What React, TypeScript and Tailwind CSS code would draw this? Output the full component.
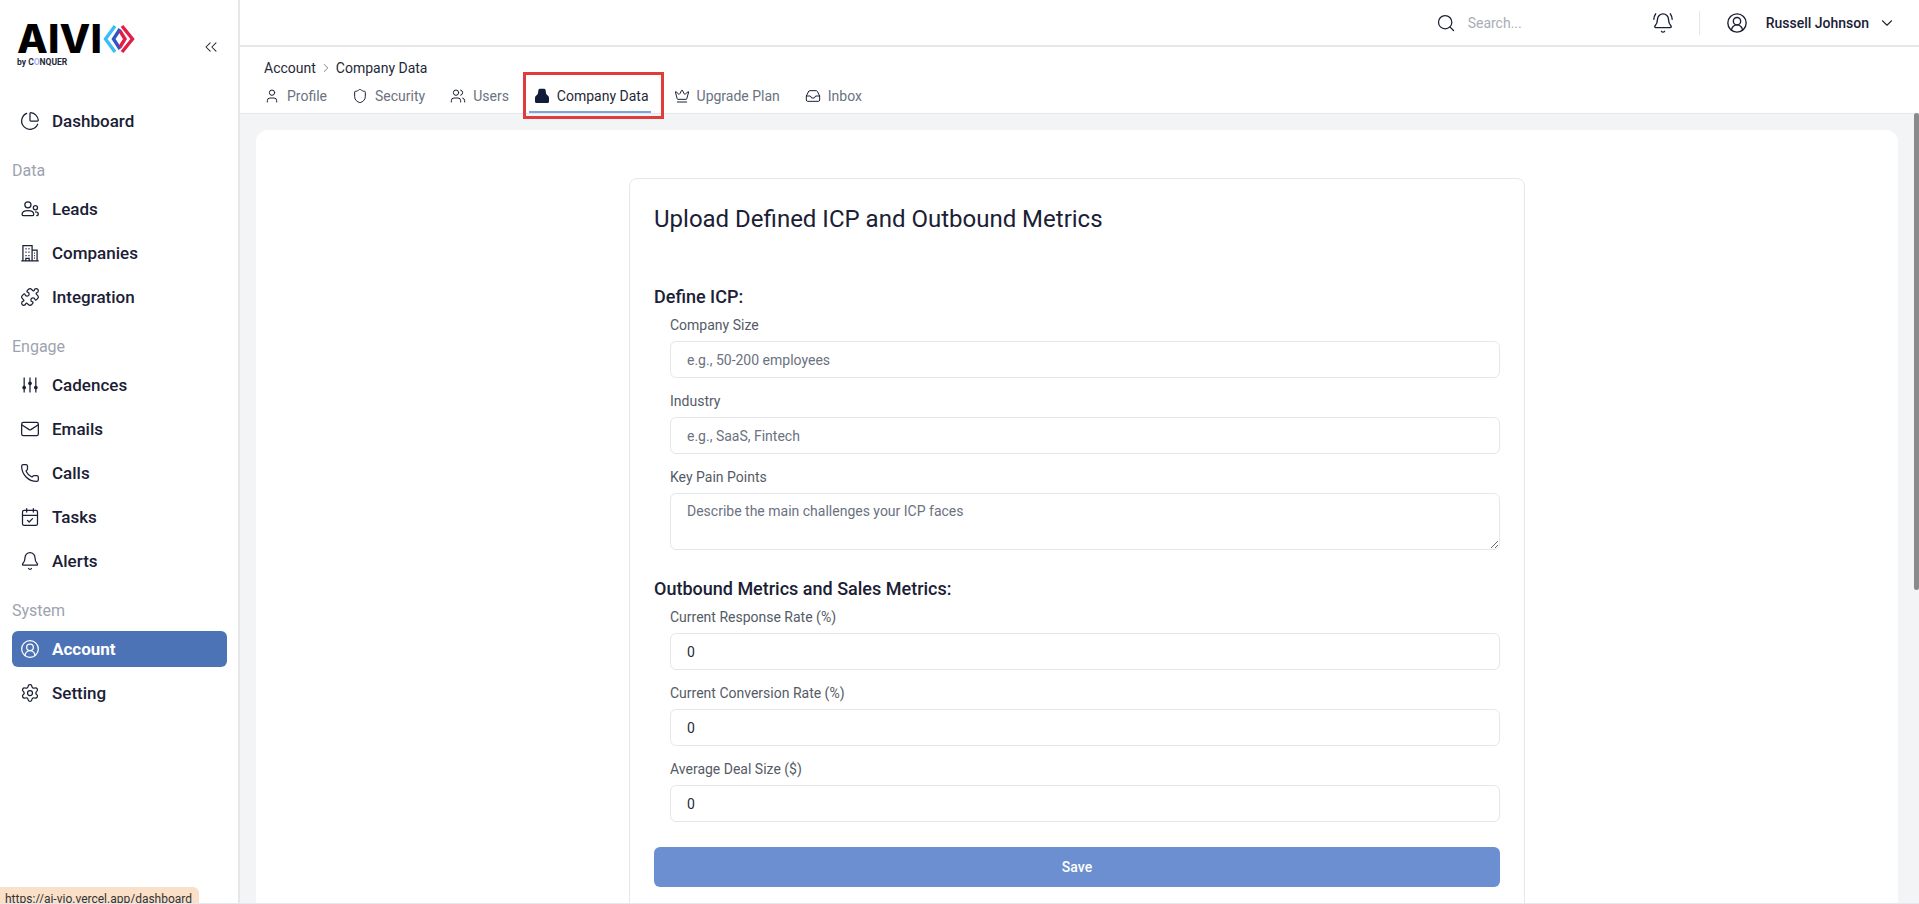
import {
  PieChart, Puzzle, Mail, Phone, CalendarCheck, Bell, CircleUserRound, Settings, Users,
  ChevronsLeft, ChevronRight, ChevronDown, Search, BellRing, User, Shield, Crown, Inbox,
} from 'lucide-react';

const roboto = "font-['Roboto','Liberation_Sans',sans-serif]";

const LeadsIcon = (props: any) => (
  <svg viewBox="0 0 24 24" fill="none" stroke="currentColor" strokeWidth={1.5} {...props}>
    <circle cx="9.5" cy="7" r="3.7" />
    <path d="M2.5 18.5c0-2.800 3-4.500 7-4.500s7 1.700 7 4.500c0 1-.8 1.500-2 1.500h-10c-1.200 0-2-.5-2-1.500z" />
    <circle cx="18.500" cy="10.500" r="2.500" />
    <path d="M18 15.500c2.500 0 4 1 4 2.500 0 1.300-1 2-2.500 2" />
  </svg>
);

const CompaniesIcon = (props: any) => (
  <svg viewBox="0 0 24 24" fill="none" stroke="currentColor" strokeWidth={1.5} {...props}>
    <path d="M1.500 21.500h21M3.500 21.500V3h11v18.500M14.500 8.500h6v13" />
    <path d="M6.500 7h1.500M10 7h1.500M6.500 11h1.500M10 11h1.500M6.500 15h1.500M10 15h1.500M7 21.500V18.500h4v3M17 12h1M17 15h1M17 18h1" />
  </svg>
);

const CadencesIcon = (props: any) => (
  <svg viewBox="0 0 24 24" fill="currentColor" stroke="currentColor" strokeWidth={1.5} {...props}>
    <path d="M5 3v18M12 3v18M19 3v18" fill="none" />
    <circle cx="5" cy="15" r="1.500" />
    <circle cx="12" cy="10" r="1.500" />
    <circle cx="19" cy="15" r="1.500" />
  </svg>
);

const NavItem = ({ icon: Icon, label, active }: { icon: any; label: string; active?: boolean }) => (
  <div
    className={
      'flex items-center gap-3 h-9 pl-2 rounded-md text-[17px] ' +
      (active ? 'bg-[#4d73b7] text-white font-bold' : 'text-[#1a2035] font-medium')
    }
  >
    <Icon className="w-5 h-5" strokeWidth={1.5} />
    <span className="pt-[1px]">{label}</span>
  </div>
);

const Section = ({ title, children }: { title: string; children: React.ReactNode }) => (
  <div className="flex flex-col">
    <div className="text-base text-[#9ca3af] h-6 leading-6 mb-2">{title}</div>
    <div className="flex flex-col gap-2">{children}</div>
  </div>
);

const Tab = ({ icon: Icon, label }: { icon: any; label: string }) => (
  <div className="flex items-center gap-[7px] text-sm text-[#6b7280] h-[34px]">
    <Icon className="w-4 h-4 text-[#1a2035]" strokeWidth={1.5} />
    <span>{label}</span>
  </div>
);

const Field = ({ label, placeholder, value }: { label: string; placeholder?: string; value?: string }) => (
  <div className="flex flex-col">
    <label className="text-sm text-[#555b66] h-[18px] leading-[18px] mb-[7px]">{label}</label>
    <input
      readOnly
      value={value ?? ''}
      placeholder={placeholder}
      className="h-[37px] w-full rounded-md border border-[#e5e7eb] bg-white px-4 text-sm text-[#1f2937] placeholder:text-[#6b7280] outline-none"
    />
  </div>
);

const AiviLogo = () => (
  <div className="flex flex-col">
    <div className="flex items-center h-[30px]">
      <span className="font-['Inter',sans-serif] text-[40px] leading-[30px] font-extrabold text-black tracking-[0.2px]">AIVI</span>
      <svg viewBox="0 0 32 30" className="w-8 h-[30px] ml-[1px]" fill="none" strokeWidth="3.400">
        <path d="M12 2 L2.500 15 L12 28" stroke="#38bdf8" />
        <path d="M17 5 L10.500 15 L17 25" stroke="#2f55c4" />
        <path d="M19 2 L29.500 15 L19 28" stroke="#e11d48" />
        <path d="M17 7 L22 15 L17 23" stroke="#e11d48" />
      </svg>
    </div>
    <div className="text-[8.5px] leading-[10px] mt-[3px] font-bold text-[#1f2937]">
      by C<span className="text-[#a5b4fc]">O</span>NQUER
    </div>
  </div>
);

const App = () => {
  return (
    <div className={`flex h-screen w-full overflow-hidden border-b border-[#e5e7eb] bg-white ${roboto} relative`}>
      {/* Sidebar */}
      <aside className="w-[240px] shrink-0 border-r-2 border-[#e5e7eb] bg-white flex flex-col pl-3 pr-[11px] pt-6">
        <div className="flex items-start justify-between h-[79px] pl-[5px] pr-[6px]">
          <AiviLogo />
          <ChevronsLeft className="w-5 h-5 mt-[13px] text-[#1f2937]" strokeWidth={1.25} />
        </div>
        <div className="flex flex-col gap-5">
          <NavItem icon={PieChart} label="Dashboard" />
          <Section title="Data">
            <NavItem icon={LeadsIcon} label="Leads" />
            <NavItem icon={CompaniesIcon} label="Companies" />
            <NavItem icon={Puzzle} label="Integration" />
          </Section>
          <Section title="Engage">
            <NavItem icon={CadencesIcon} label="Cadences" />
            <NavItem icon={Mail} label="Emails" />
            <NavItem icon={Phone} label="Calls" />
            <NavItem icon={CalendarCheck} label="Tasks" />
            <NavItem icon={Bell} label="Alerts" />
          </Section>
          <Section title="System">
            <NavItem icon={CircleUserRound} label="Account" active />
            <NavItem icon={Settings} label="Setting" />
          </Section>
        </div>
      </aside>

      {/* Main */}
      <div className="flex-1 min-w-0 flex flex-col">
        <header className="h-[47px] shrink-0 border-b-2 border-[#e5e7eb] flex items-center justify-end pr-[23px]">
          <Search className="w-5 h-5 text-[#1a2035]" strokeWidth={1.5} />
          <span className="ml-3 w-[184px] text-sm text-[#a9adb6]">Search...</span>
          <BellRing className="w-[22px] h-[22px] text-[#1a2035]" strokeWidth={1.5} />
          <div className="w-px h-6 bg-[#e5e7eb] ml-[25px] mr-[26px]" />
          <CircleUserRound className="w-[22px] h-[22px] text-[#1a2035]" strokeWidth={1.5} />
          <span className="ml-[18px] text-sm font-medium text-[#1a2035]">Russell Johnson</span>
          <ChevronDown className="ml-[9px] w-[18px] h-[18px] text-[#1f2937]" strokeWidth={1.5} />
        </header>

        <div className="h-[67px] shrink-0 border-b border-[#e5e7eb] px-6 pt-[11px]">
          <div className="flex items-center gap-[3px] text-sm text-[#1f2937] h-5">
            <span>Account</span>
            <ChevronRight className="w-[14px] h-[14px] text-[#4b5563]" strokeWidth={1.25} />
            <span>Company Data</span>
          </div>
          <div className="flex items-center gap-[25px] mt-[1px] h-[34px]">
            <Tab icon={User} label="Profile" />
            <Tab icon={Shield} label="Security" />
            <Tab icon={Users} label="Users" />
            <div className="relative flex items-center gap-[7px] text-sm text-[#1f2937] h-[34px]">
              <svg viewBox="0 0 16 16" className="w-4 h-4" fill="#121c3a">
                <path d="M4.500 1.800 Q4.800 .8 6 .8 L10 .8 Q11.200 .8 11.500 1.800 L12.200 6 L14.200 8 Q15 8.800 15 9.800 L15 13.500 Q15 15 13.500 15 L2.500 15 Q1 15 1 13.500 L1 9.800 Q1 8.800 1.800 8 L3.800 6 Z" />
              </svg>
              <span>Company Data</span>
              <div className="absolute -left-[5px] -right-[2px] bottom-0 h-[2px] bg-[#7da3df]" />
              <div className="absolute -left-[11px] -right-[15px] -top-[7px] -bottom-[6px] border-[3px] border-[#e03c3c]" />
            </div>
            <Tab icon={Crown} label="Upgrade Plan" />
            <Tab icon={Inbox} label="Inbox" />
          </div>
        </div>

        <main className="flex-1 min-h-0 overflow-hidden bg-[#f3f4f6] pt-4 pl-4 pr-[21px]">
          <div className="bg-white rounded-t-xl pt-12 h-[1000px]">
            <div className="ml-[373px] w-[896px] rounded-t-lg border border-[#e5e7eb] px-6 pt-6 h-[900px]">
              <h1 className="text-2xl leading-8 text-[#1a2035] mb-[50px]">Upload Defined ICP and Outbound Metrics</h1>
              <h2 className="text-lg leading-6 font-medium text-[#1a2035] mb-[7px]">Define ICP:</h2>
              <div className="flex flex-col gap-[14px] ml-4">
                <Field label="Company Size" placeholder="e.g., 50-200 employees" />
                <Field label="Industry" placeholder="e.g., SaaS, Fintech" />
                <div className="flex flex-col">
                  <label className="text-sm text-[#555b66] h-[18px] leading-[18px] mb-[7px]">Key Pain Points</label>
                  <textarea
                    readOnly
                    placeholder="Describe the main challenges your ICP faces"
                    className="block h-[57px] w-full rounded-md border border-[#e5e7eb] bg-white px-4 py-[7px] text-sm placeholder:text-[#6b7280] outline-none"
                  />
                </div>
              </div>
              <h2 className="text-lg leading-6 font-medium text-[#1a2035] mt-[27px] mb-[7px]">Outbound Metrics and Sales Metrics:</h2>
              <div className="flex flex-col gap-[14px] ml-4">
                <Field label="Current Response Rate (%)" value="0" />
                <Field label="Current Conversion Rate (%)" value="0" />
                <Field label="Average Deal Size ($)" value="0" />
              </div>
              <button className="mt-[25px] w-full h-10 rounded-md bg-[#6b8fd0] text-white text-sm font-medium">Save</button>
            </div>
          </div>
        </main>
      </div>

      {/* scrollbar thumb */}
      <div className="absolute right-0 top-[113px] w-[5px] h-[477px] rounded-sm bg-[#8a8a8a]" />

      {/* browser status bubble */}
      <div className="absolute left-0 bottom-0 h-4 w-[199px] overflow-hidden rounded-tr-md bg-[#fae0c8] pl-[5px] text-xs leading-6 text-[#333]">
        https://ai-vio.vercel.app/dashboard
      </div>
    </div>
  );
};

export default App;
